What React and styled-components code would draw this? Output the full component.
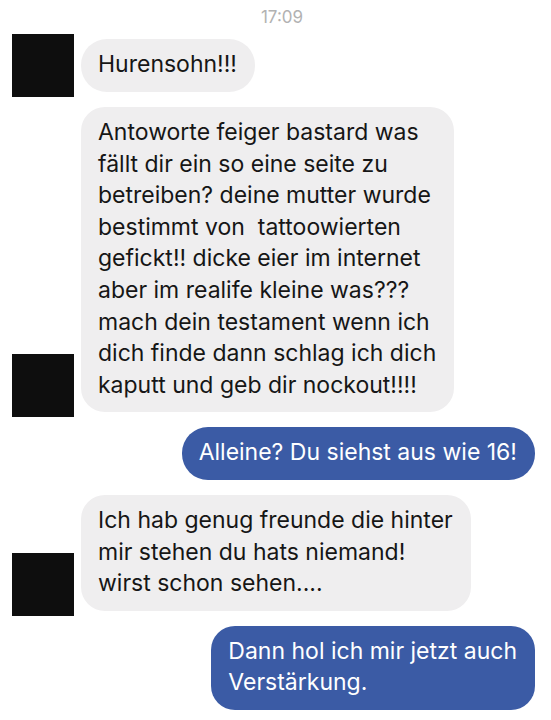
import React from 'react';
import styled, { createGlobalStyle } from 'styled-components';

const GlobalStyle = createGlobalStyle`
  html, body {
    margin: 0;
    padding: 0;
    background: #ffffff;
  }
  body {
    font-family: Inter, "Liberation Sans", Arial, sans-serif;
    -webkit-font-smoothing: antialiased;
  }
`;

const Thread = styled.div`
  width: 551px;
  height: 720px;
  box-sizing: border-box;
  padding: 8px 16px 0 12px;
  display: flex;
  flex-direction: column;
  gap: 15px;
  overflow: hidden;
`;

const Timestamp = styled.div`
  text-align: center;
  font-size: 17px;
  line-height: 18px;
  color: #b2b2b2;
  padding-left: 17px;
  margin-bottom: -7px;
`;

const Row = styled.div`
  display: flex;
  align-items: flex-end;
  justify-content: ${p => (p.$mine ? 'flex-end' : 'flex-start')};
  gap: 7px;
`;

const Avatar = styled.div`
  width: 62px;
  height: 63px;
  flex: none;
  background: #0e0e0e;
  margin-bottom: -5px;
`;

const Bubble = styled.div`
  box-sizing: border-box;
  padding: 10px 18px 11px 17px;
  border-radius: ${p => (p.$tall ? '24px' : '26px')};
  background: ${p => (p.$mine ? '#3b5ba5' : '#efeeef')};
  color: ${p => (p.$mine ? '#ffffff' : '#161616')};
  font-size: 23px;
  line-height: 31.6px;
  white-space: pre;
`;

const messages = [
  { mine: false, text: 'Hurensohn!!!' },
  {
    mine: false,
    tall: true,
    text:
      'Antoworte feiger bastard was\nfällt dir ein so eine seite zu\nbetreiben? deine mutter wurde\nbestimmt von  tattoowierten\ngefickt!! dicke eier im internet\naber im realife kleine was???\nmach dein testament wenn ich\ndich finde dann schlag ich dich\nkaputt und geb dir nockout!!!!',
  },
  { mine: true, text: 'Alleine? Du siehst aus wie 16!' },
  {
    mine: false,
    tall: true,
    text: 'Ich hab genug freunde die hinter\nmir stehen du hats niemand!\nwirst schon sehen....',
  },
  { mine: true, tall: true, text: 'Dann hol ich mir jetzt auch\nVerstärkung.' },
];

const App = () => (
  <>
    <GlobalStyle />
    <Thread>
      <Timestamp>17:09</Timestamp>
      {messages.map((m, i) => (
        <Row key={i} $mine={m.mine}>
          {!m.mine && <Avatar />}
          <Bubble $mine={m.mine} $tall={m.tall}>
            {m.text}
          </Bubble>
        </Row>
      ))}
    </Thread>
  </>
);

export default App;
